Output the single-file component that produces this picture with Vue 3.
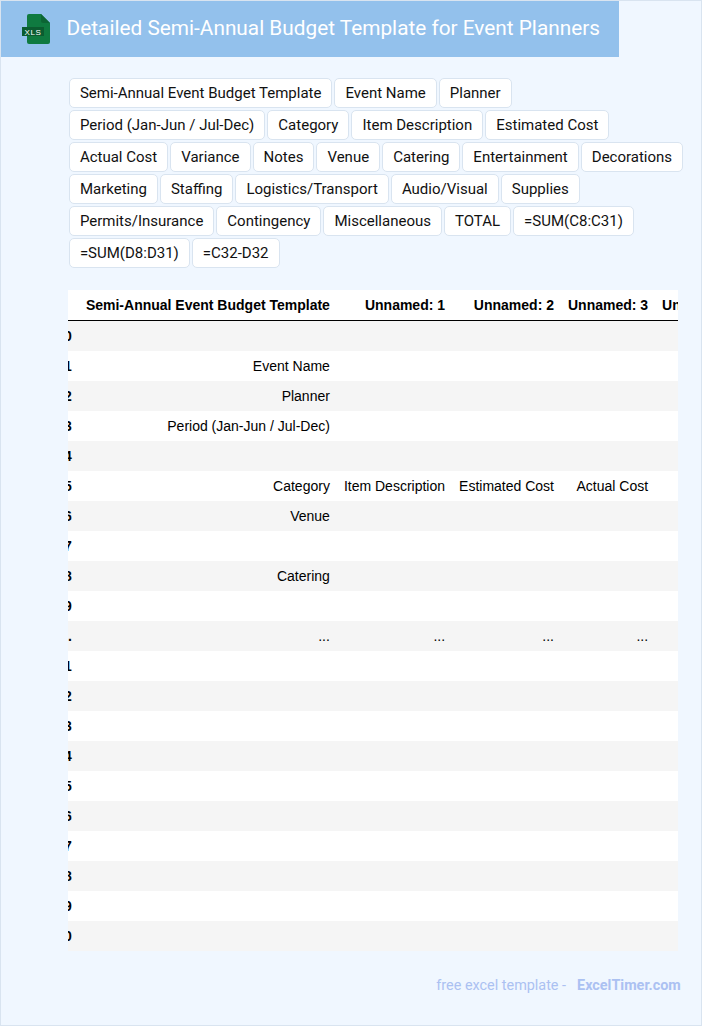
<script setup>
const tags = ['Semi-Annual Event Budget Template','Event Name','Planner','Period (Jan-Jun / Jul-Dec)','Category','Item Description','Estimated Cost','Actual Cost','Variance','Notes','Venue','Catering','Entertainment','Decorations','Marketing','Staffing','Logistics/Transport','Audio/Visual','Supplies','Permits/Insurance','Contingency','Miscellaneous','TOTAL','=SUM(C8:C31)','=SUM(D8:D31)','=C32-D32']
const head = ['Semi-Annual Event Budget Template','Unnamed: 1','Unnamed: 2','Unnamed: 3','Unnamed: 4','Unnamed: 5']
const e = ['', '', '', '', '', '']
const rows = [
  ['0', e], ['1', ['Event Name','','','','','']], ['2', ['Planner','','','','','']],
  ['3', ['Period (Jan-Jun / Jul-Dec)','','','','','']], ['4', e],
  ['5', ['Category','Item Description','Estimated Cost','Actual Cost','Variance','Notes']],
  ['6', ['Venue','','','','','']], ['7', e], ['8', ['Catering','','','','','']], ['9', e],
  ['...', ['...','...','...','...','...','...']],
  ['21', e], ['22', e], ['23', e], ['24', e], ['25', e], ['26', e], ['27', e], ['28', e], ['29', e], ['30', e]
]
</script>

<template>
  <div class="page">
    <header class="banner">
      <svg class="icon" width="28" height="30" viewBox="0 0 28 30">
        <path d="M7 0h12l9 9v19a2 2 0 0 1-2 2H7a2 2 0 0 1-2-2V2a2 2 0 0 1 2-2z" fill="#0f7a40" />
        <path d="M19 0l9 9h-7a2 2 0 0 1-2-2z" fill="#0c6534" />
        <rect x="0" y="13" width="22" height="9" fill="#0b5c30" />
        <text x="11" y="20.8" text-anchor="middle" class="icon-text">XLS</text>
      </svg>
      <h1 class="title">Detailed Semi-Annual Budget Template for Event Planners</h1>
    </header>

    <div class="tags">
      <span v-for="t in tags" :key="t" class="tag">{{ t }}</span>
    </div>

    <div class="table-clip">
      <table class="frame">
        <thead>
          <tr>
            <th></th>
            <th v-for="h in head" :key="h">{{ h }}</th>
          </tr>
        </thead>
        <tbody>
          <tr v-for="r in rows" :key="r[0]">
            <th>{{ r[0] }}</th>
            <td v-for="(c, i) in r[1]" :key="i">{{ c }}</td>
          </tr>
        </tbody>
      </table>
    </div>

    <footer class="foot">
      <span>free excel template -</span>
      <b>ExcelTimer.com</b>
    </footer>
  </div>
</template>

<style>
html, body { margin: 0; padding: 0; }
</style>

<style scoped>
.page {
  box-sizing: border-box;
  width: 702px;
  height: 1026px;
  border: 1px solid #d9e4f0;
  background: #f0f7ff;
  overflow: hidden;
  font-family: Roboto, sans-serif;
}
.banner {
  display: flex;
  align-items: center;
  width: 618px;
  height: 56px;
  background: #93c1ec;
  box-sizing: border-box;
  padding-left: 21px;
}
.icon { flex: none; display: block; margin-right: 16.6px; }
.icon-text { font: 400 8px "Liberation Sans", sans-serif; fill: #fff; letter-spacing: .6px; }
.title {
  margin: 0 0 2px;
  font-size: 20.8px;
  font-weight: 400;
  color: #fff;
  white-space: nowrap;
}
.tags {
  display: flex;
  flex-wrap: wrap;
  gap: 2px;
  margin: 21px 8px 0 67.9px;
}
.tag {
  box-sizing: border-box;
  height: 30px;
  line-height: 28px;
  padding: 0 10px;
  background: #fff;
  border: 1px solid #d9e4f0;
  border-radius: 5px;
  font-size: 15px;
  color: #111;
  white-space: nowrap;
}
.table-clip {
  width: 610px;
  margin: 22px 0 0 67px;
  overflow: hidden;
}
.frame {
  margin-left: -18.7px;
  border-collapse: collapse;
  font: 14px "Liberation Sans", Arial, sans-serif;
  color: #000;
  background: #fff;
}
.frame th, .frame td {
  padding: 0 7px;
  height: 30px;
  text-align: right;
  white-space: nowrap;
}
.frame thead th { border-bottom: 1px solid #000; height: 30px; }
.frame th { font-weight: 700; }
.frame td { font-weight: 400; }
.frame tbody tr:nth-child(odd) { background: #f5f5f5; }
.foot {
  display: flex;
  justify-content: flex-end;
  gap: 11px;
  margin: 25px 20.2px 0 0;
  font-size: 14.4px;
  line-height: 20px;
  color: #abc1f2;
}
.foot b { font-weight: 700; }
</style>
